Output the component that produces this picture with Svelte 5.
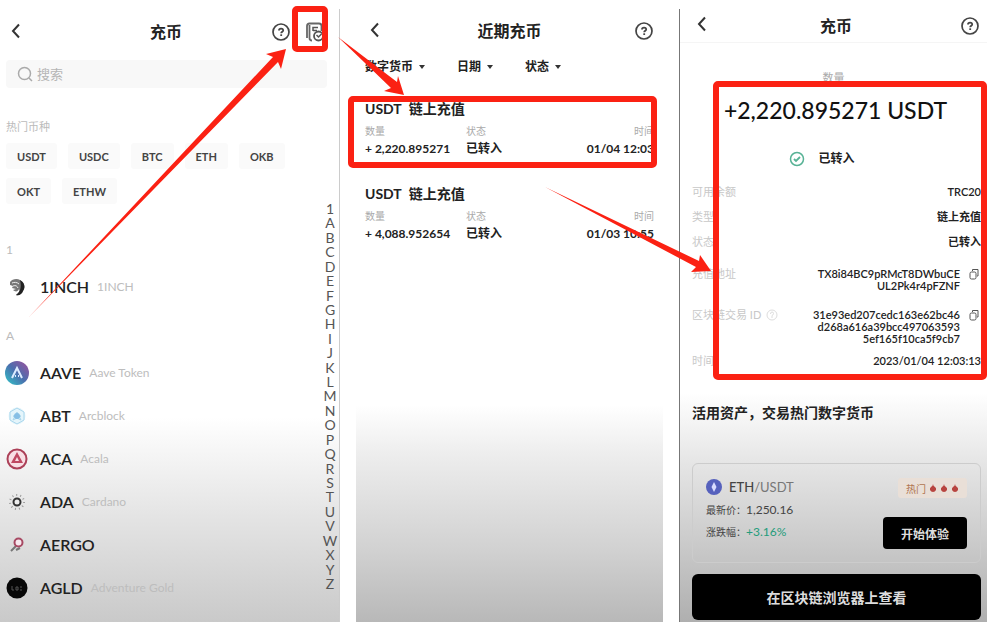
<script>
    const hotCoins = ["USDT", "USDC", "BTC", "ETH", "OKB", "OKT", "ETHW"];

    const groups = [
        { letter: "1", coins: [{ symbol: "1INCH", name: "1INCH" }] },
        {
            letter: "A",
            coins: [
                { symbol: "AAVE", name: "Aave Token" },
                { symbol: "ABT", name: "Arcblock" },
                { symbol: "ACA", name: "Acala" },
                { symbol: "ADA", name: "Cardano" },
                { symbol: "AERGO", name: "" },
                { symbol: "AGLD", name: "Adventure Gold" },
            ],
        },
    ];

    const letters = "1ABCDEFGHIJKLMNOPQRSTUVWXYZ".split("");

    const filters = ["数字货币", "日期", "状态"];

    const records = [
        { amount: "+ 2,220.895271", time: "01/04 12:03" },
        { amount: "+ 4,088.952654", time: "01/03 10:55" },
    ];

    const details = [
        { label: "可用余额", lines: ["TRC20"] },
        { label: "类型", lines: ["链上充值"] },
        { label: "状态", lines: ["已转入"] },
        {
            label: "充值地址",
            lines: ["TX8i84BC9pRMcT8DWbuCE", "UL2Pk4r4pFZNF"],
            copy: true,
        },
        {
            label: "区块链交易 ID",
            lines: [
                "31e93ed207cedc163e62bc46",
                "d268a616a39bcc497063593",
                "5ef165f10ca5f9cb7",
            ],
            copy: true,
            help: true,
        },
        { label: "时间", lines: ["2023/01/04 12:03:13"] },
    ];
</script>

{#snippet backIcon()}
    <button class="icon-btn" aria-label="返回">
        <svg viewBox="0 0 18 18" width="18" height="18">
            <path d="M12 2.5 6 9l6 6.5" fill="none" stroke="#333" stroke-width="2" />
        </svg>
    </button>
{/snippet}

{#snippet helpIcon()}
    <button class="icon-btn" aria-label="帮助">
        <svg viewBox="0 0 18 18" width="18" height="18" fill="none" stroke="#444">
            <circle cx="9" cy="9" r="8" stroke-width="1.7" />
            <path d="M7 7.6c0-2.6 4.2-2.5 4.2-.2 0 1.4-2 1.4-2 2.9" stroke-width="1.8" />
            <path d="M9.2 11.3v1.7" stroke-width="1.8" />
        </svg>
    </button>
{/snippet}

{#snippet coinIcon(symbol)}
    <svg class="coin-icon" viewBox="0 0 24 24" width="24" height="24">
        {#if symbol === "1INCH"}
            <path d="M5 7c2-3 7-4 10-2 4 2 6 7 3 11-1 3-4 5-7 4 3-2 4-4 3-6-1 3-4 3-6 1l3-1-4-1 1-2-3-1z" fill="#777" />
            <path d="M15 5c4 2 6 7 3 11-1 3-4 5-7 4 4-3 6-7 4-15z" fill="#222" />
            <path d="M7 8c2-1 5-1 7 1M8 11c3-1 4 0 5 2" fill="none" stroke="#eee" />
        {:else if symbol === "AAVE"}
            <defs>
                <linearGradient id="aave" x1="0" y1="1" x2="1" y2="0">
                    <stop offset="0.1" stop-color="#35b5c3" />
                    <stop offset="0.5" stop-color="#4b6fae" />
                    <stop offset="1" stop-color="#a04f9c" />
                </linearGradient>
            </defs>
            <circle cx="12" cy="12" r="12" fill="url(#aave)" />
            <path d="m7 17 5-10 5 10M10 15h1m2 0h1" fill="none" stroke="#dcecff" stroke-width="2" />
        {:else if symbol === "ABT"}
            <circle cx="12" cy="12" r="8.5" fill="#e5f5fb" />
            <path d="m12 4 7 4v8l-7 4-7-4V8zM8 16l4-8 4 8-8-4h8z" fill="none" stroke="#a9d6ec" />
            <circle cx="12" cy="12" r="3" fill="#87bfe5" />
        {:else if symbol === "ACA"}
            <circle cx="12" cy="12" r="9.5" fill="#f8dfe5" stroke="#ac4058" stroke-width="2" />
            <path d="m12 5 6 11H6z" fill="#bf4962" />
            <path d="m12 10 2 4h-4z" fill="#f8dfe5" />
        {:else if symbol === "ADA"}
            <circle cx="12" cy="12" r="7" fill="none" stroke="#999" stroke-width="2" stroke-dasharray="1 3" />
            <circle cx="12" cy="12" r="3.5" fill="#eee" stroke="#333" stroke-width="2" />
        {:else if symbol === "AERGO"}
            <path d="m6 18 5-5m0 4 4-2" fill="none" stroke="#777" stroke-width="2" />
            <circle cx="13.5" cy="9.5" r="4" fill="#f7e8ee" stroke="#a74963" stroke-width="2" />
        {:else}
            <circle cx="12" cy="12" r="10.5" fill="#070707" />
            <path d="M7 10v4h2m2-3h2v3h-2zm4 0h2m-2 3h2" fill="none" stroke="#555" />
        {/if}
    </svg>
{/snippet}

<main class="page">
    <section class="panel coins">
        <header>
            <div>{@render backIcon()}</div>
            <h2>充币</h2>
            <div class="actions">
                {@render helpIcon()}
                <button class="icon-btn" aria-label="充币记录">
                    <svg viewBox="0 0 20 20" width="20" height="20" fill="none" stroke="#555" stroke-width="1.8">
                        <path d="M7 18.5q-2.500 0-2.500-2.500V3M2 16V4q0-2.500 2.500-2.500H14q2.500 0 2.500 2.500v5" stroke="#666" />
                        <path d="M8 9V5.500h5M8 8.500h4" stroke-width="1.500" />
                        <circle cx="13.500" cy="14" r="4.500" />
                        <path d="m11.500 13 2 2 3-3" stroke-width="1.500" />
                    </svg>
                </button>
            </div>
        </header>

        <label class="search">
            <svg viewBox="0 0 16 16" width="16" height="16" fill="none" stroke="#aaa" stroke-width="1.500">
                <circle cx="7.500" cy="7.500" r="6" />
                <path d="m12 12 3 3" />
            </svg>
            <input type="text" placeholder="搜索" aria-label="搜索" />
        </label>

        <div class="coins-body">
            <div class="coins-list">
                <h3>热门币种</h3>
                <div class="chips">
                    {#each hotCoins as coin}
                        <button>{coin}</button>
                    {/each}
                </div>
                {#each groups as group}
                    <h4>{group.letter}</h4>
                    <ul>
                        {#each group.coins as coin}
                            <li>
                                {@render coinIcon(coin.symbol)}
                                <b>{coin.symbol}</b>
                                <span>{coin.name}</span>
                            </li>
                        {/each}
                    </ul>
                {/each}
            </div>
            <nav class="letters">
                {#each letters as letter}
                    <a href="#{letter}">{letter}</a>
                {/each}
            </nav>
        </div>
    </section>

    <section class="panel history">
        <header>
            <div>{@render backIcon()}</div>
            <h2>近期充币</h2>
            <div class="actions">{@render helpIcon()}</div>
        </header>
        <div class="filters">
            {#each filters as filter}
                <label>
                    <select aria-label={filter}>
                        <option>{filter}</option>
                    </select>
                </label>
            {/each}
        </div>
        {#each records as record}
            <article>
                <h3>USDT <span>链上充值</span></h3>
                <dl>
                    <div><dt>数量</dt><dd>{record.amount}</dd></div>
                    <div><dt>状态</dt><dd>已转入</dd></div>
                    <div class="time"><dt>时间</dt><dd>{record.time}</dd></div>
                </dl>
            </article>
        {/each}
    </section>

    <section class="panel detail">
        <header>
            <div>{@render backIcon()}</div>
            <h2>充币</h2>
            <div class="actions">{@render helpIcon()}</div>
        </header>
        <p class="caption">数量</p>
        <p class="amount">+2,220.895271 USDT</p>
        <p class="status">
            <svg viewBox="0 0 16 16" width="16" height="16" fill="none" stroke="#57b295">
                <circle cx="8" cy="8" r="6.500" stroke-width="1.500" />
                <path d="m5 8 2 2 4-4" stroke-width="1.800" />
            </svg>
            已转入
        </p>
        <dl class="rows">
            {#each details as row}
                <div class:tall={row.copy}>
                    <dt>
                        {row.label}
                        {#if row.help}
                            <svg viewBox="0 0 12 12" width="12" height="12" fill="none" stroke="#ddd">
                                <circle cx="6" cy="6" r="5" />
                                <path d="M4.500 5q0-2 1.500-2t1.500 1.500Q7.500 6 6 6.500V9" />
                            </svg>
                        {/if}
                    </dt>
                    <dd>
                        <span>
                            {#each row.lines as line}
                                <span class="line">{line}</span>
                            {/each}
                        </span>
                        {#if row.copy}
                            <button class="icon-btn" aria-label="复制">
                                <svg viewBox="0 0 10 12" width="10" height="12" fill="none" stroke="#555">
                                    <rect x="1" y="4" width="6" height="7" rx="1.500" />
                                    <path d="M3.500 3V1.500H9V8H8" />
                                </svg>
                            </button>
                        {/if}
                    </dd>
                </div>
            {/each}
        </dl>

        <h3>活用资产，交易热门数字货币</h3>
        <div class="card">
            <div class="pair">
                <div class="pair-name">
                    <svg viewBox="0 0 16 16" width="16" height="16">
                        <circle cx="8" cy="8" r="8" fill="#5661bd" />
                        <path d="m8 3 2.500 5L8 13 5.500 8z" fill="#d9dcff" />
                    </svg>
                    <b>ETH</b>/USDT
                </div>
                <p>最新价：<span>1,250.16</span></p>
                <p>涨跌幅：<span class="up">+3.16%</span></p>
            </div>
            <div class="side">
                <div class="tag">
                    <span>热门</span>
                    {#each [1, 2, 3] as flame}
                        <svg viewBox="0 0 8 10" width="8" height="10">
                            <path d="M4 1q0 2 2 3 1.500 1 1 3-1 2-3 2T1 7q-.5-2 1-3 2-1 2-3z" fill="#b8443f" />
                        </svg>
                    {/each}
                </div>
                <button>开始体验</button>
            </div>
        </div>
        <button class="explorer">在区块链浏览器上查看</button>
    </section>

    <!-- guide marks drawn over the three screens -->
    <svg class="marks" viewBox="0 0 987 622" aria-hidden="true">
        <g fill="none" stroke="#fb2113" stroke-width="6">
            <rect x="295" y="9" width="30" height="40" rx="2" />
            <rect x="351" y="99" width="303" height="66" rx="2" />
            <rect x="716" y="84" width="268" height="293" rx="2" />
        </g>
        <g fill="#fb2113">
            <path d="M29 317 273 57 266 54 286 49 281 69 278 62z" />
            <path d="M338 37 397 82 398 76 404 95 384 91 391 88z" />
            <path d="M545 187 699 261 700 255 711 271 691 272 696 267z" />
        </g>
    </svg>
</main>

<style>
    :global(body) {
        margin: 0;
        background: #fff;
    }

    .page {
        position: relative;
        display: grid;
        grid-template-columns: 340fr 307fr 308fr;
        column-gap: 16px;
        min-height: 100vh;
        padding-top: 9px;
        box-sizing: border-box;
        overflow: hidden;
        color: #222;
        font-family: Lato, "Noto Sans CJK SC", sans-serif;
        font-size: 12px;
    }

    .panel {
        min-width: 0;
        background: linear-gradient(#fff 64%, #ededed 72%, #d2d2d2 87%, #b6b6b6);
    }

    .coins {
        border-right: 1px solid #ccc;
        background: linear-gradient(#fff 66%, #e4e4e4 82%, #c8c8c8);
    }

    .detail {
        border-left: 1px solid #777;
        background: linear-gradient(#fff 62%, #e6e6e6 73%, #cbcbcb 86%, #adadad);
    }

    h2,
    h3,
    h4,
    p,
    ul,
    dl,
    dd {
        margin: 0;
        padding: 0;
    }

    button,
    input,
    select {
        border: none;
        padding: 0;
        background: none;
        color: inherit;
        font: inherit;
    }

    svg {
        display: block;
        flex: none;
    }

    header {
        display: grid;
        grid-template-columns: 1fr auto 1fr;
        align-items: center;
        height: 44px;
        padding: 0 10px;
    }

    h2 {
        font-size: 16px;
        line-height: 24px;
    }

    .actions {
        display: flex;
        justify-content: flex-end;
        align-items: center;
        gap: 15px;
    }

    /* coin picker */
    .coins header {
        height: 46px;
        padding: 0 14px 0 7px;
    }

    .search {
        display: flex;
        align-items: center;
        gap: 4px;
        height: 28px;
        margin: 5px 12px 0 6px;
        padding-left: 11px;
        border-radius: 4px;
        background: #f8f8f8;
    }

    .search input {
        flex: 1;
        min-width: 0;
        font-size: 13px;
    }

    .search input::placeholder {
        color: #b5b5b5;
    }

    .coins-body {
        display: flex;
        justify-content: space-between;
    }

    .coins-list {
        padding: 30px 0 0 6px;
    }

    .coins-list h3 {
        color: #bbb;
        font-size: 11px;
        font-weight: normal;
        line-height: 18px;
    }

    .chips {
        display: flex;
        flex-wrap: wrap;
        gap: 9px 11px;
        max-width: 290px;
        margin: 7px 0 37px;
    }

    .chips button {
        height: 26px;
        padding: 0 11px;
        border-radius: 3px;
        background: #fafafa;
        color: #444;
        font-size: 11px;
        font-weight: bold;
    }

    h4 {
        color: #bbb;
        font-size: 12px;
        font-weight: normal;
        line-height: 18px;
    }

    ul {
        margin: 6px 0 19px;
        list-style: none;
    }

    li {
        display: flex;
        align-items: center;
        height: 43px;
    }

    .coin-icon {
        margin-left: -1px;
    }

    li b {
        margin: 0 8px 0 11px;
        font-size: 16px;
        font-weight: 600;
    }

    li span {
        color: #bdbdbd;
    }

    .letters {
        display: flex;
        flex-direction: column;
        justify-content: space-between;
        align-items: center;
        width: 18px;
        height: 389px;
        margin-top: 114px;
    }

    .letters a {
        color: #555;
        font-size: 14px;
        line-height: 14px;
        text-decoration: none;
    }

    /* recent deposits */
    .filters {
        display: flex;
        gap: 32px;
        margin: 5px 0 17px 9px;
    }

    .filters label {
        display: flex;
        align-items: center;
        gap: 5px;
        font-weight: 600;
        line-height: 18px;
    }

    .filters label::after {
        content: "";
        border: 3px solid transparent;
        border-top: 4px solid #333;
        border-bottom: none;
    }

    select {
        appearance: none;
    }

    article {
        height: 68px;
        margin-bottom: 17px;
        padding: 6px 9px 0;
        box-sizing: border-box;
    }

    article h3 {
        font-size: 14px;
        line-height: 20px;
    }

    article h3 span {
        margin-left: 4px;
    }

    article dl {
        display: grid;
        grid-template-columns: 101px 1fr auto;
        margin-top: 4px;
        line-height: 17px;
    }

    article dt {
        color: #aaa;
        font-size: 10px;
    }

    article dd {
        font-weight: bold;
    }

    .time {
        text-align: right;
    }

    /* deposit details */
    .detail header {
        height: 33px;
        padding: 0 8px 0 13px;
        border-bottom: 1px solid #f5f5f5;
    }

    .caption,
    .amount,
    .status {
        text-align: center;
    }

    .detail header h2 {
        line-height: 20px;
    }

    .caption {
        margin-top: 26px;
        color: #aaa;
        font-size: 11px;
        line-height: 18px;
    }

    .amount {
        margin-top: 8px;
        padding-left: 4px;
        color: #111;
        font-size: 23px;
        font-weight: 500;
        line-height: 30px;
    }

    .status {
        display: flex;
        justify-content: center;
        align-items: center;
        gap: 13px;
        margin: 25px 0 18px;
        padding-right: 23px;
        font-weight: bold;
        line-height: 18px;
    }

    .rows {
        padding: 0 6px 0 12px;
        font-size: 11px;
        line-height: 12px;
    }

    .rows div {
        display: flex;
        justify-content: space-between;
        margin-bottom: 13px;
    }

    .rows div.tall {
        margin: 20px 0 10px;
    }

    .rows div.tall + div.tall {
        margin-top: 17px;
    }

    dt {
        display: flex;
        gap: 5px;
        color: #c8c8c8;
    }

    .time dt {
        justify-content: flex-end;
    }

    .rows dd {
        display: flex;
        align-items: flex-start;
        gap: 9px;
        font-weight: 600;
        text-align: right;
    }

    .rows .icon-btn {
        margin-right: 2px;
    }

    .line {
        display: block;
    }

    .detail h3 {
        margin: 36px 12px 0;
        font-size: 14px;
        line-height: 20px;
    }

    .card {
        display: flex;
        justify-content: space-between;
        height: 100px;
        margin: 40px 6px 11px 12px;
        padding: 14px 13px 13px;
        box-sizing: border-box;
        border: 1px solid #ccc;
        border-radius: 6px;
        color: #444;
        font-size: 10px;
    }

    .pair-name {
        display: flex;
        align-items: center;
        margin-bottom: 3px;
        color: #777;
        font-size: 13px;
        line-height: 18px;
    }

    .pair-name svg {
        margin-right: 7px;
    }

    .pair-name b {
        color: #444;
        font-weight: 500;
    }

    .pair p {
        line-height: 21px;
    }

    .pair p span {
        font-size: 12px;
    }

    .pair .up {
        color: #259c7b;
    }

    .side {
        display: flex;
        flex-direction: column;
        align-items: flex-end;
        justify-content: space-between;
    }

    .tag {
        display: flex;
        align-items: center;
        gap: 3px;
        height: 20px;
        padding: 0 8px;
        border-radius: 3px;
        background: #e9dfd7;
        color: #b07450;
    }

    .side button {
        height: 32px;
        padding: 0 18px;
        border-radius: 4px;
        background: #000;
        color: #ddd;
        font-size: 12px;
        font-weight: bold;
    }

    .explorer {
        display: block;
        width: calc(100% - 18px);
        height: 46px;
        margin-left: 12px;
        border-radius: 6px;
        background: #000;
        color: #ddd;
        font-size: 14px;
        font-weight: bold;
    }

    .marks {
        position: absolute;
        top: 0;
        left: 0;
        width: 100%;
        pointer-events: none;
    }
</style>
